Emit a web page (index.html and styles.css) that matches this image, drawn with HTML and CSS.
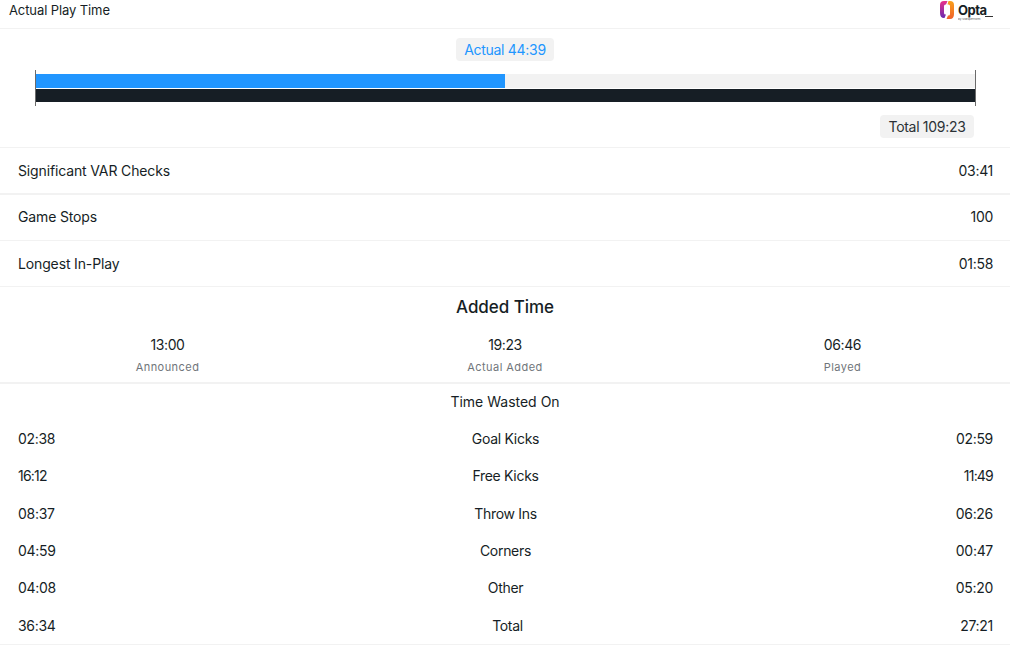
FILE: index.html
```html
<!DOCTYPE html>
<html lang="en">
<head>
<meta charset="utf-8">
<title>Actual Play Time</title>
<link rel="stylesheet" href="styles.css">
</head>
<body>
<header class="header">
  <span class="header-title">Actual Play Time</span>
  <div class="logo">
    <svg class="logo-mark" width="16" height="20" viewBox="0 0 16 20">
      <defs>
        <linearGradient id="lg1" x1="0" y1="0" x2="0" y2="1"><stop offset="0" stop-color="#e8308a"/><stop offset="1" stop-color="#6a2bb0"/></linearGradient>
        <linearGradient id="lg2" x1="0" y1="0" x2="0" y2="1"><stop offset="0" stop-color="#f9a01b"/><stop offset="1" stop-color="#f0602a"/></linearGradient>
      </defs>
      <path d="M8.500 1H5Q1 1 1 5V13Q1 18 5 18H5.500L7 14.500H6.500Q5 14.500 5 13V6Q5 4.500 6.500 4.500H7Z" fill="url(#lg1)"/>
      <path d="M9.500 1H11Q15 1 15 5V14Q15 19 11 19H7.500L9 15.500H9.500Q11 15.500 11 14V6Q11 4.500 9.500 4.500H8.500Z" fill="url(#lg2)"/>
    </svg>
    <div class="logo-text">
      <span class="logo-name">Opta</span>
      <div class="logo-sub"><span class="logo-by">by statsperform</span><span class="logo-line"></span></div>
    </div>
  </div>
</header>
<section class="bars">
  <div class="pill-row"><span class="pill pill-actual">Actual 44:39</span></div>
  <div class="chart">
    <div class="track"><div class="fill" style="width:49.9%"></div></div>
    <div class="total-bar"></div>
  </div>
  <div class="pill-row pill-row-end"><span class="pill">Total 109:23</span></div>
</section>
<div class="stat stat-thick"><span class="stat-label">Significant VAR Checks</span><span class="num">03:41</span></div>
<div class="stat stat-up"><span class="stat-label">Game Stops</span><span class="num">100</span></div>
<div class="stat"><span class="stat-label">Longest In-Play</span><span class="num">01:58</span></div>
<section class="added">
  <h2 class="added-title">Added Time</h2>
  <div class="added-grid">
    <div class="added-item"><span class="added-value">13:00</span><span class="added-label">Announced</span></div>
    <div class="added-item"><span class="added-value">19:23</span><span class="added-label">Actual Added</span></div>
    <div class="added-item"><span class="added-value">06:46</span><span class="added-label">Played</span></div>
  </div>
</section>
<section class="wasted">
  <h3 class="wasted-title">Time Wasted On</h3>
  <div class="wasted-row"><span class="num">02:38</span><span class="wasted-name">Goal Kicks</span><span class="wasted-right num">02:59</span></div>
  <div class="wasted-row"><span class="num tight">16:12</span><span class="wasted-name">Free Kicks</span><span class="wasted-right num tight">11:49</span></div>
  <div class="wasted-row"><span class="num">08:37</span><span class="wasted-name">Throw Ins</span><span class="wasted-right num">06:26</span></div>
  <div class="wasted-row"><span class="num">04:59</span><span class="wasted-name">Corners</span><span class="wasted-right num">00:47</span></div>
  <div class="wasted-row"><span class="num">04:08</span><span class="wasted-name">Other</span><span class="wasted-right num">05:20</span></div>
  <div class="wasted-row wasted-total"><span class="num">36:34</span><span class="wasted-name wasted-name-total">Total</span><span class="wasted-right num">27:21</span></div>
</section>
</body>
</html>
```
FILE: styles.css
```css
* { box-sizing: border-box; }
html, body { margin: 0; padding: 0; }
body {
  width: 1010px;
  height: 647px;
  overflow: hidden;
  background: #fff;
  color: #161e25;
  font-family: "Inter", "Liberation Sans", sans-serif;
  font-size: 14px;
  font-weight: 375;
  letter-spacing: 0;
}
.header {
  height: 29px;
  padding: 0 17px 0 9px;
  display: flex;
  align-items: center;
  justify-content: space-between;
  border-bottom: 1px solid #f2f2f2;
}
.header-title { font-size: 13px; line-height: 20px; margin-top: -8px; letter-spacing: -0.1px; }
.logo { display: flex; align-items: flex-start; gap: 3px; height: 28px; }
.logo-mark { display: block; }
.logo-text { display: flex; flex-direction: column; width: 35px; padding-top: 4px; }
.logo-name { font-size: 13px; font-weight: 700; line-height: 12px; letter-spacing: -0.5px; }
.logo-sub { display: flex; align-items: flex-start; height: 6px; }
.logo-by { width: 27px; margin-top: 1.900px; font-size: 3px; line-height: 3px; white-space: nowrap; overflow: hidden; color: #555; letter-spacing: 0; }
.logo-line { height: 1px; flex: 1; background: #333; }
.bars { height: 119px; padding: 9px 35px 0; border-bottom: 1px solid #f2f2f2; }
.pill-row { display: flex; justify-content: center; }
.pill-row-end { justify-content: flex-end; margin-top: 9px; padding-right: 1px; }
.pill {
  display: inline-block;
  padding: 0 8.500px;
  height: 23px;
  line-height: 23px;
  border-radius: 4px;
  background: #f2f2f2;
  font-size: 14px;
  letter-spacing: -0.3px;
  color: #2b3136;
}
.pill-actual { color: #2196ff; }
.chart {
  margin-top: 9px;
  height: 36px;
  padding: 4px 0 3px;
  border-left: 1px solid #6b6b6b;
  border-right: 1px solid #6b6b6b;
  width: 941px;
}
.track { height: 14px; background: #f2f2f2; }
.fill { height: 100%; background: #2196ff; }
.total-bar { height: 13px; margin-top: 1px; background: #161e25; }
.stat {
  height: 46px;
  padding: 0 17px 0 18px;
  display: flex;
  align-items: center;
  justify-content: space-between;
  border-bottom: 1px solid #f2f2f2;
}
.stat-thick { height: 47px; border-bottom-width: 2px; }
.stat-up { padding-bottom: 2px; }
.stat-label { letter-spacing: -0.14px; }
.num { letter-spacing: -0.3px; }
.added { height: 97px; border-bottom: 2px solid #f2f2f2; }
.added-title {
  margin: 0;
  padding-top: 10px;
  font-size: 17px;
  font-weight: 500;
  line-height: 21px;
  letter-spacing: -0.05px;
  text-align: center;
}
.added-grid { display: grid; grid-template-columns: 335px 340px 335px; margin-top: 17px; }
.added-item { display: flex; flex-direction: column; align-items: center; }
.added-value { font-size: 14px; line-height: 20px; font-weight: 390; letter-spacing: -0.4px; }
.added-label { font-size: 11px; line-height: 14px; color: #70757a; letter-spacing: 0.45px; margin-top: 5px; }
.wasted-title {
  margin: 0;
  padding-top: 8px;
  font-size: 14px;
  font-weight: 400;
  line-height: 20px;
  text-align: center;
}
.wasted-row {
  display: grid;
  grid-template-columns: 1fr 1fr 1fr;
  height: 37.400px;
  align-items: center;
  padding: 0 17px 0 18px;
}
.wasted-row:nth-child(2) { margin-top: 7.600px; }
.wasted-name { text-align: center; letter-spacing: -0.3px; }
.wasted-name-total { padding-left: 4px; }
.wasted-right { text-align: right; }
.num.tight { letter-spacing: -0.8px; }
.wasted-total { height: 38.400px; border-bottom: 1px solid #f2f2f2; }
```
